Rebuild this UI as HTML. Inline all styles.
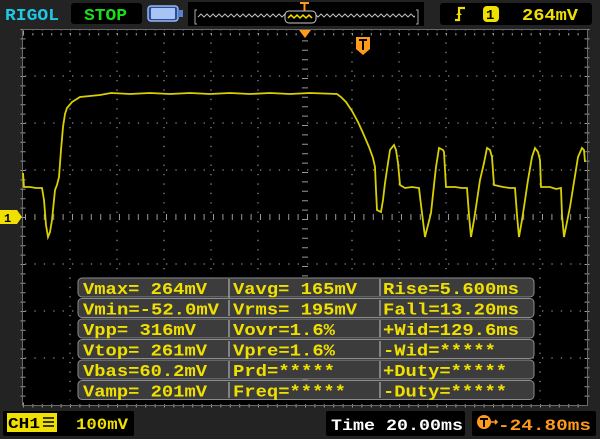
<!DOCTYPE html>
<html><head><meta charset="utf-8"><style>
html,body{margin:0;padding:0;background:#232323;width:600px;height:439px;overflow:hidden}
svg{display:block}
text{font-family:"Liberation Mono",monospace;font-weight:bold}
</style></head><body>
<svg width="600" height="439" viewBox="0 0 600 439" xmlns="http://www.w3.org/2000/svg">
<defs><clipPath id="sq"><rect x="197" y="5" width="218" height="20"/></clipPath></defs>
<rect width="600" height="439" fill="#232323"/>
<text x="5" y="20" fill="#1ec8e6" font-size="17" textLength="54" lengthAdjust="spacingAndGlyphs">RIGOL</text>
<rect x="71" y="3" width="71" height="21" rx="3" fill="#000"/>
<text x="84" y="20" fill="#18e018" font-size="17" textLength="43" lengthAdjust="spacingAndGlyphs">STOP</text>
<rect x="148" y="6" width="30" height="15" rx="3" fill="#2a4f9a" stroke="#9ab8ee" stroke-width="1.5"/>
<rect x="151" y="8" width="24" height="11" rx="1" fill="#a8c4f4"/>
<rect x="178" y="10" width="5" height="7" fill="#5a82cc"/>
<rect x="188" y="2" width="236" height="24" fill="#000"/>
<path d="M197 10h-2v14h2M416 10h2v14h-2" stroke="#aaa" fill="none"/>
<g clip-path="url(#sq)">
<path d="M198 17 l3 -3 l3 3 l3 -3 l3 3 l3 -3 l3 3 l3 -3 l3 3 l3 -3 l3 3 l3 -3 l3 3 l3 -3 l3 3 l3 -3 l3 3 l3 -3 l3 3 l3 -3 l3 3 l3 -3 l3 3 l3 -3 l3 3 l3 -3 l3 3 l3 -3 l3 3 l3 -3 l3 3 l3 -3 l3 3 l3 -3 l3 3 l3 -3 l3 3 l3 -3 l3 3 l3 -3 l3 3 l3 -3 l3 3 l3 -3 l3 3 l3 -3 l3 3 l3 -3 l3 3 l3 -3 l3 3 l3 -3 l3 3 l3 -3 l3 3 l3 -3 l3 3 l3 -3 l3 3 l3 -3 l3 3 l3 -3 l3 3 l3 -3 l3 3 l3 -3 l3 3 l3 -3 l3 3 l3 -3 l3 3 l3 -3 l3 3 l3 -3 l3 3 l3 -3 l3 3 l3 -3 l3 3" stroke="#bbb" fill="none" stroke-width="1"/>
</g>
<rect x="285" y="11" width="31" height="12" rx="4" fill="#000" stroke="#ccc"/>
<path d="M288 18 l3 -3 l3 3 l3 -3 l3 3 l3 -3 l3 3 l3 -3 l3 3" stroke="#f0e000" fill="none" stroke-width="1.5"/>
<path d="M300 3h9M304.5 3v8" stroke="#ff9a1a" stroke-width="2"/>
<rect x="440" y="3" width="152" height="22" rx="3" fill="#000"/>
<path d="M455 20h4v-12h6" stroke="#f0e000" stroke-width="2.2" fill="none"/>
<path d="M456 15l3-3l3 3z" fill="#f0e000"/>
<rect x="483" y="6" width="16" height="16" rx="4" fill="#f0e000"/>
<text x="486" y="19" fill="#000" font-size="14">1</text>
<text x="522" y="20" fill="#f0e000" font-size="17" textLength="56" lengthAdjust="spacingAndGlyphs">264mV</text>
<rect x="23" y="29" width="564" height="376" fill="#000"/>
<g stroke="#8a8a8a" stroke-width="1.3" stroke-dasharray="1.3 8.1" fill="none">
<path d="M70 33V405M117 33V405M164 33V405M211 33V405M258 33V405M352 33V405M399 33V405M446 33V405M493 33V405M540 33V405"/>
<path d="M25 76H587M25 123H587M25 170H587M25 264H587M25 311H587M25 358H587"/>
</g>
<g stroke="#999" stroke-width="1" fill="none">
<path d="M25 217H587" stroke-dasharray="1 8.4" stroke-width="6"/>
<path d="M305 31V405" stroke-dasharray="1 8.4" stroke-width="6"/>
<path d="M23 33H587" stroke-dasharray="1 8.4" stroke-width="5"/>
<path d="M23 405H587" stroke-dasharray="1 8.4" stroke-width="5"/>
<path d="M23 29V405" stroke-dasharray="1 8.4" stroke-width="5"/>
<path d="M587 29V405" stroke-dasharray="1 8.4" stroke-width="5"/>
</g>
<rect x="22.5" y="29.5" width="565" height="376" fill="none" stroke="#6a6a6a"/>
<rect x="24" y="31" width="562" height="2" fill="#000"/>
<rect x="24" y="400" width="562" height="4" fill="#000"/>
<polyline fill="none" stroke="#d8d000" stroke-width="1.8" points="23,173 24,187 30,187 36,188 42,188 44,200 46,225 48,237 50,232 52,220 54,200 55,190 57,185 59,177 61,150 63,127 65,114 67,108 72,102 80,97 90,96 100,95 111,93 130,94 150,93 170,94 190,93 210,94 230,93 250,94 270,93 290,94 310,93 337,94 341,97 346,102 352,111 358,122 363,133 369,147 373,158 375,167 376,190 377,210 381,212 383,200 385,183 388,163 390,150 394,145 396,150 398,163 400,185 405,188 412,187 419,188 421,205 425,237 428,225 431,213 434,185 436,167 439,148 443,150 444,152 446,187 455,187 462,188 467,188 469,215 471,237 474,220 476,207 480,180 484,163 487,148 490,150 492,157 494,185 503,187 510,188 515,188 517,215 519,237 522,220 524,207 528,180 532,157 535,148 538,152 540,160 541,187 550,187 556,189 561,188 562,215 564,237 567,222 570,207 574,182 578,157 582,148 584,150 585,162"/>
<path d="M299 30h12l-6 8z" fill="#ff9a1a"/>
<path d="M356 37h14v12l-7 6l-7-6z" fill="#ff9a1a"/>
<path d="M359 40h8M363 40v10" stroke="#000" stroke-width="2"/>
<path d="M0 210h17l5 7l-5 7h-17z" fill="#f0e000"/>
<text x="4" y="222" fill="#000" font-size="12">1</text>
<g>
<rect x="78" y="278" width="456" height="19" rx="4" fill="#3c3c3c" stroke="#8c8c8c"/>
<rect x="78" y="298.5" width="456" height="19" rx="4" fill="#3c3c3c" stroke="#8c8c8c"/>
<rect x="78" y="319" width="456" height="19" rx="4" fill="#3c3c3c" stroke="#8c8c8c"/>
<rect x="78" y="339.5" width="456" height="19" rx="4" fill="#3c3c3c" stroke="#8c8c8c"/>
<rect x="78" y="360" width="456" height="19" rx="4" fill="#3c3c3c" stroke="#8c8c8c"/>
<rect x="78" y="380.5" width="456" height="19" rx="4" fill="#3c3c3c" stroke="#8c8c8c"/>
<path d="M229 279v19M229 300v16M229 320v17M229 341v16M229 361v17M229 382v16M380 279v17M380 300v16M380 320v17M380 341v16M380 361v17M380 382v16" stroke="#9a9a9a" stroke-width="1.5"/>
</g>
<g fill="#f0e000" font-size="17">
<text x="83" y="294" textLength="124" lengthAdjust="spacingAndGlyphs">Vmax= 264mV</text>
<text x="233" y="294" textLength="124" lengthAdjust="spacingAndGlyphs">Vavg= 165mV</text>
<text x="383" y="294" textLength="136" lengthAdjust="spacingAndGlyphs">Rise=5.600ms</text>
<text x="83" y="314.5" textLength="136" lengthAdjust="spacingAndGlyphs">Vmin=-52.0mV</text>
<text x="233" y="314.5" textLength="124" lengthAdjust="spacingAndGlyphs">Vrms= 195mV</text>
<text x="383" y="314.5" textLength="136" lengthAdjust="spacingAndGlyphs">Fall=13.20ms</text>
<text x="83" y="335" textLength="113" lengthAdjust="spacingAndGlyphs">Vpp= 316mV</text>
<text x="233" y="335" textLength="102" lengthAdjust="spacingAndGlyphs">Vovr=1.6%</text>
<text x="383" y="335" textLength="136" lengthAdjust="spacingAndGlyphs">+Wid=129.6ms</text>
<text x="83" y="355.5" textLength="124" lengthAdjust="spacingAndGlyphs">Vtop= 261mV</text>
<text x="233" y="355.5" textLength="102" lengthAdjust="spacingAndGlyphs">Vpre=1.6%</text>
<text x="383" y="355.5" textLength="113" lengthAdjust="spacingAndGlyphs">-Wid=*****</text>
<text x="83" y="376" textLength="124" lengthAdjust="spacingAndGlyphs">Vbas=60.2mV</text>
<text x="233" y="376" textLength="102" lengthAdjust="spacingAndGlyphs">Prd=*****</text>
<text x="383" y="376" textLength="124" lengthAdjust="spacingAndGlyphs">+Duty=*****</text>
<text x="83" y="396.5" textLength="124" lengthAdjust="spacingAndGlyphs">Vamp= 201mV</text>
<text x="233" y="396.5" textLength="113" lengthAdjust="spacingAndGlyphs">Freq=*****</text>
<text x="383" y="396.5" textLength="124" lengthAdjust="spacingAndGlyphs">-Duty=*****</text>
</g>
<rect x="3" y="411" width="131" height="25" rx="2" fill="#000"/>
<rect x="7" y="413" width="50" height="19" fill="#f0e000"/>
<text x="8" y="428" fill="#000" font-size="15" textLength="32" lengthAdjust="spacingAndGlyphs">CH1</text>
<path d="M43 418h11M43 422h11M43 426h11" stroke="#000" stroke-width="1.6"/>
<text x="76" y="429" fill="#f0e000" font-size="16" textLength="52" lengthAdjust="spacingAndGlyphs">100mV</text>
<rect x="326" y="411" width="139" height="25" rx="2" fill="#000"/>
<text x="331" y="430" fill="#fff" font-size="16" textLength="132" lengthAdjust="spacingAndGlyphs">Time 20.00ms</text>
<rect x="472" y="411" width="124" height="25" rx="2" fill="#000"/>
<circle cx="484" cy="422" r="7" fill="#ff9a1a"/>
<path d="M480 419h8M484 419v8" stroke="#000" stroke-width="2"/>
<path d="M491 422h6M495 420l2 2l-2 2" stroke="#ff9a1a" stroke-width="1.6" fill="none"/>
<text x="498" y="430" fill="#ff9a1a" font-size="16" textLength="93" lengthAdjust="spacingAndGlyphs">-24.80ms</text>
</svg>
</body></html>
